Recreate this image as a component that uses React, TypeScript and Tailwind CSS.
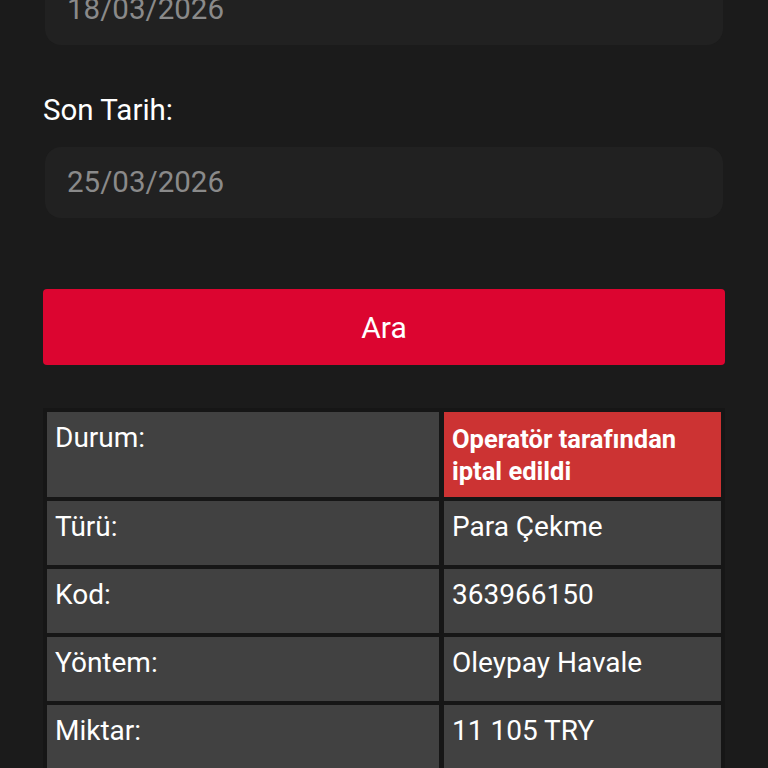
import React from 'react';

export default function App() {
  const rows = [
    { label: "Türü:", value: "Para Çekme" },
    { label: "Kod:", value: "363966150" },
    { label: "Yöntem:", value: "Oleypay Havale" },
    { label: "Miktar:", value: "11 105 TRY" },
  ];

  return (
    <div className="w-full min-h-screen h-[768px] overflow-hidden bg-[#1b1b1b] text-white font-['Roboto',sans-serif]">
      <div className="px-[43px]">
        {/* Start date (scrolled off the top) */}
        <div className="-mt-[26px] mx-[2px] h-[71px] rounded-[16px] bg-[#212121] flex items-center px-[22px] text-[29.5px] text-[#8a8a8a]">
          18/03/2026
        </div>

        <label className="block mt-[48px] text-[29.5px] leading-[34px]">Son Tarih:</label>

        <div className="mt-[20px] mx-[2px] h-[71px] rounded-[16px] bg-[#212121] flex items-center px-[22px] text-[29.5px] text-[#8a8a8a]">
          25/03/2026
        </div>

        <button className="mt-[71px] w-full h-[76px] rounded-[4px] bg-[#dc0530] text-[30px] text-white">
          Ara
        </button>

        {/* Result table */}
        <div className="mt-[43px] bg-[#161616] p-[4px] grid grid-cols-[392px_1fr] gap-x-[5px] gap-y-[4px]">
          <div className="h-[85px] bg-[#414141] pt-[10px] pl-[8px] text-[28px] leading-[32px]">Durum:</div>
          <div className="h-[85px] bg-[#cc3333] pt-[11px] pl-[8px] pr-[6px] text-[25.5px] leading-[32px] font-bold">
            Operatör tarafından iptal edildi
          </div>
          {rows.map((r) => (
            <React.Fragment key={r.label}>
              <div className="h-[64px] bg-[#414141] pt-[10px] pl-[8px] text-[28px] leading-[32px]">{r.label}</div>
              <div className="h-[64px] bg-[#414141] pt-[10px] pl-[8px] text-[28px] leading-[32px]">{r.value}</div>
            </React.Fragment>
          ))}
        </div>
      </div>
    </div>
  );
}
